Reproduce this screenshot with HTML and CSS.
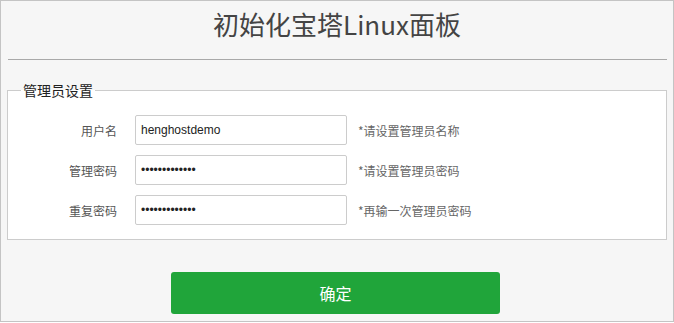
FILE: index.html
```html
<!DOCTYPE html>
<html lang="zh-CN">
<head>
<meta charset="utf-8">
<title>初始化宝塔Linux面板</title>
<link rel="stylesheet" href="styles.css">
</head>
<body>
<div class="page">
  <h1 class="title">初始化宝塔Linux面板</h1>
  <hr class="rule">
  <fieldset class="box">
    <legend class="box-legend">管理员设置</legend>
    <div class="row">
      <label class="row-label">用户名</label>
      <input class="row-input" type="text" value="henghostdemo">
      <span class="row-hint">*请设置管理员名称</span>
    </div>
    <div class="row">
      <label class="row-label">管理密码</label>
      <input class="row-input" type="password" value="1234567890123">
      <span class="row-hint">*请设置管理员密码</span>
    </div>
    <div class="row">
      <label class="row-label">重复密码</label>
      <input class="row-input" type="password" value="1234567890123">
      <span class="row-hint">*再输一次管理员密码</span>
    </div>
  </fieldset>
  <div class="actions">
    <button class="submit" type="button">确定</button>
  </div>
</div>
</body>
</html>
```

FILE: styles.css
```css
html, body {
  margin: 0;
  padding: 0;
  background: #ffffff;
}

body {
  font-family: "Liberation Sans", "Noto Sans CJK SC", sans-serif;
}

.page {
  box-sizing: border-box;
  width: 674px;
  height: 322px;
  border: 1px solid #c4c4c4;
  background: #f6f6f6;
  padding: 0 6px;
}

.title {
  margin: 0;
  height: 58px;
  line-height: 46px;
  font-size: 26px;
  font-weight: normal;
  color: #444444;
  text-align: center;
  font-family: "Noto Sans CJK SC", "Noto Sans", sans-serif;
}

.rule {
  margin: 0 0 0 1px;
  height: 0;
  border: 0;
  border-top: 1px solid #a9a9a9;
}

.box {
  margin: 20px 0 0;
  padding: 0 0 14px;
  border: 1px solid #cccccc;
  background: #ffffff;
  min-width: 0;
}

.box-legend {
  margin-left: 13px;
  padding: 0 2px;
  font-size: 14px;
  line-height: 20px;
  color: #222222;
  font-family: "Noto Sans CJK SC", sans-serif;
}

.row {
  display: flex;
  align-items: center;
  height: 30px;
  margin-top: 10px;
}

.row:first-of-type {
  margin-top: 15px;
}

.row-label {
  width: 109px;
  margin-right: 18px;
  text-align: right;
  font-size: 12px;
  color: #555555;
  font-family: "Noto Sans CJK SC", sans-serif;
}

.row-input {
  box-sizing: border-box;
  width: 212px;
  height: 30px;
  margin: 0;
  padding: 0 5px;
  border: 1px solid #cccccc;
  border-radius: 2px;
  font-size: 12px;
  color: #222222;
  background: #ffffff;
  font-family: "Liberation Sans", sans-serif;
  outline: none;
}

.row-hint {
  margin-left: 11px;
  font-size: 12px;
  color: #666666;
  font-family: "Noto Sans CJK SC", sans-serif;
}

.actions {
  padding: 32px 0 0 164px;
}

.submit {
  display: block;
  width: 329px;
  height: 42px;
  margin: 0;
  padding: 0;
  border: 0;
  border-radius: 3px;
  background: #20a53a;
  color: #ffffff;
  font-size: 16px;
  font-family: "Noto Sans CJK SC", sans-serif;
  cursor: pointer;
}
```
